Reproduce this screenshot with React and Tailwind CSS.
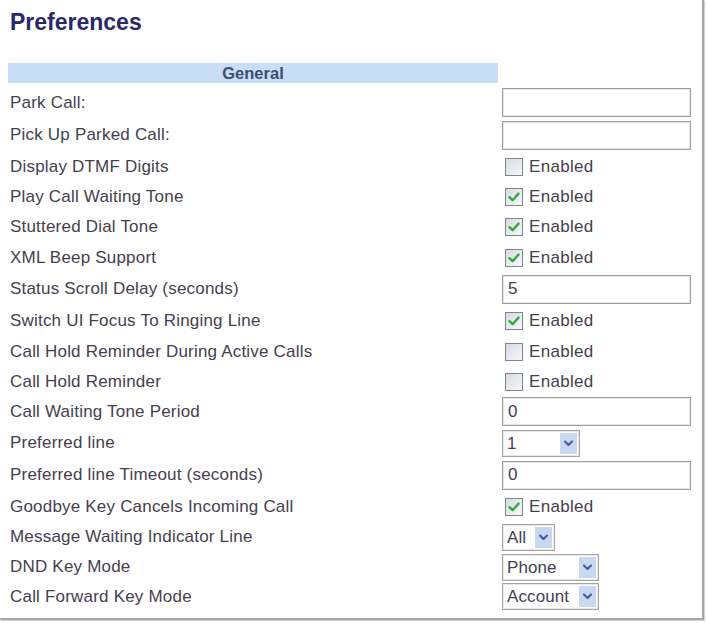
import React from "react";

const rows = [
  { label: "Park Call:", type: "text", value: "", h: "h-[33px]" },
  { label: "Pick Up Parked Call:", type: "text", value: "", h: "h-[32px]" },
  { label: "Display DTMF Digits", type: "check", checked: false, h: "h-[31px]" },
  { label: "Play Call Waiting Tone", type: "check", checked: true, h: "h-[30px]" },
  { label: "Stuttered Dial Tone", type: "check", checked: true, h: "h-[30px]" },
  { label: "XML Beep Support", type: "check", checked: true, h: "h-[31px]" },
  { label: "Status Scroll Delay (seconds)", type: "text", value: "5", h: "h-[32px]" },
  { label: "Switch UI Focus To Ringing Line", type: "check", checked: true, h: "h-[31px]" },
  { label: "Call Hold Reminder During Active Calls", type: "check", checked: false, h: "h-[31px]" },
  { label: "Call Hold Reminder", type: "check", checked: false, h: "h-[29px]" },
  { label: "Call Waiting Tone Period", type: "text", value: "0", h: "h-[31px]" },
  { label: "Preferred line", type: "select", value: "1", w: "w-[78px]", h: "h-[32px]" },
  { label: "Preferred line Timeout (seconds)", type: "text", value: "0", h: "h-[32px]" },
  { label: "Goodbye Key Cancels Incoming Call", type: "check", checked: true, h: "h-[31px]" },
  { label: "Message Waiting Indicator Line", type: "select", value: "All", w: "w-[53px]", h: "h-[30px]" },
  { label: "DND Key Mode", type: "select", value: "Phone", w: "w-[97px]", h: "h-[30px]" },
  { label: "Call Forward Key Mode", type: "select", value: "Account", w: "w-[97px]", h: "h-[29px]" },
];

function TextBox({ value }) {
  return (
    <div className="w-[189px] h-[29px] border border-[#a0a0a0] shadow-[inset_0_0_0_1px_#e6e6e6] bg-white flex items-center pl-[5px] text-[17px] tracking-[0.2px] text-[#45404f]">
      {value}
    </div>
  );
}

function CheckBox({ checked }) {
  return (
    <div className="flex items-center gap-[6px] pl-[3px]">
      <div className="w-[18px] h-[18px] border border-[#7f8590] bg-gradient-to-br from-[#d6dbe3] to-[#f7f8fa] flex items-center justify-center">
        {checked && (
          <svg width="14" height="14" viewBox="0 0 14 14">
            <path d="M2.5 7.2 L5.6 10.2 L11.5 3.6" fill="none" stroke="#36a83c" strokeWidth="2.4" strokeLinecap="round" strokeLinejoin="round" />
          </svg>
        )}
      </div>
      <span className="text-[17px] tracking-[0.3px] text-[#45404f]">Enabled</span>
    </div>
  );
}

function Select({ value, w }) {
  return (
    <div className={`${w} h-[27px] border border-[#a5a5a5] shadow-[inset_0_0_0_1px_#e8e8e8] bg-white flex items-stretch justify-between pl-[4px] pr-[2px] py-[2px]`}>
      <span className="self-center text-[17px] tracking-[0.1px] text-[#45404f] leading-none">{value}</span>
      <div className="w-[17px] bg-[#c9d8f1] flex items-center justify-center">
        <svg width="11" height="9" viewBox="0 0 11 9">
          <path d="M2 2.5 L5.5 6 L9 2.5" fill="none" stroke="#3d5d9c" strokeWidth="2.1" strokeLinecap="round" strokeLinejoin="round" />
        </svg>
      </div>
    </div>
  );
}

export default function App() {
  return (
    <div className="bg-white w-[707px] h-[623px]" style={{ fontFamily: '"Liberation Sans", Arial, sans-serif' }}>
      <div className="w-[704px] h-[620px] border-r-2 border-b-2 border-[#a6a6a6] shadow-[1px_1px_0_#d4d4d4] pl-[8px] pt-[11px]">
        <div className="pl-[2px] text-[23px] leading-none font-bold text-[#28296a] mb-[29px]">Preferences</div>
        <div className="flex gap-[4px]">
          <div className="w-[490px] h-[20px] bg-[#c8def7] flex items-center justify-center text-[16.5px] font-bold text-[#3d4d72]">
            General
          </div>
        </div>
        <div className="mt-[3px] flex flex-col">
          {rows.map((r, i) => (
            <div key={i} className={`flex items-center ${r.h}`}>
              <div className="w-[494px] pl-[2px] text-[17px] tracking-[0.2px] text-[#45404f]">{r.label}</div>
              {r.type === "text" && <TextBox value={r.value} />}
              {r.type === "check" && <CheckBox checked={r.checked} />}
              {r.type === "select" && <Select value={r.value} w={r.w} />}
            </div>
          ))}
        </div>
      </div>
    </div>
  );
}
